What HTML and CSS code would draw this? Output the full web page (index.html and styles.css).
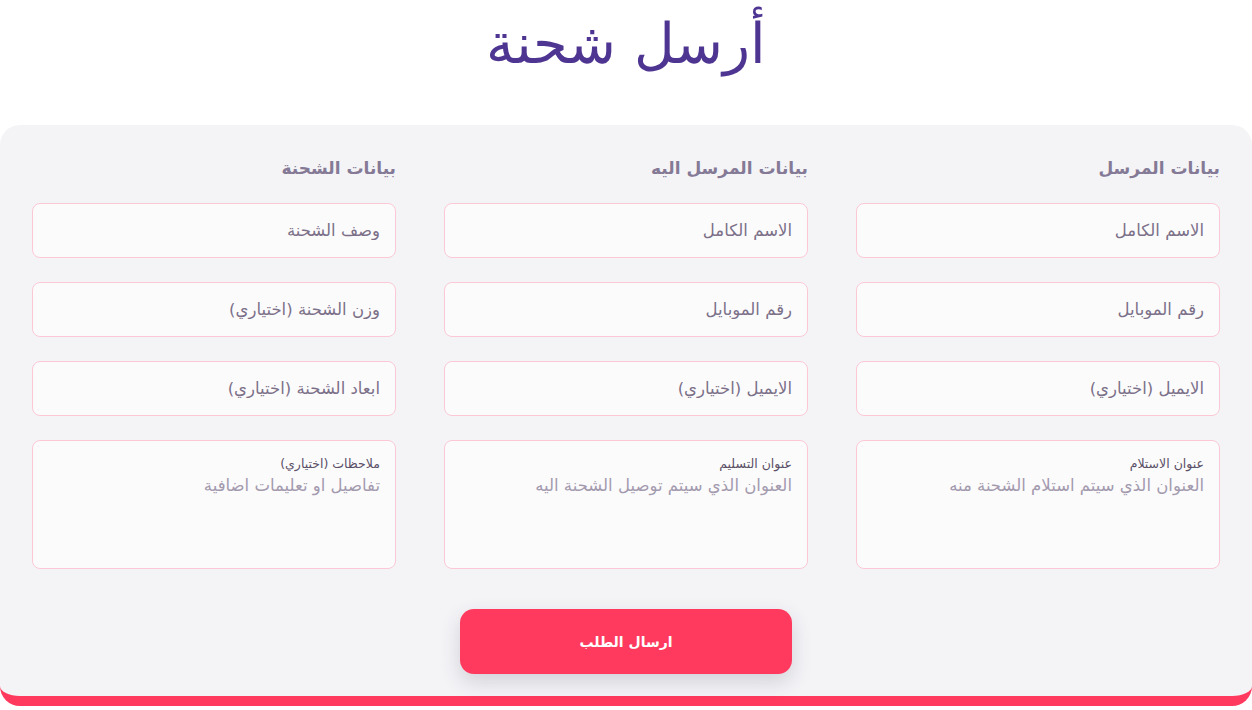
FILE: index.html
```html
<!DOCTYPE html>
<html lang="ar" dir="rtl">
<head>
<meta charset="utf-8">
<title>أرسل شحنة</title>
<link rel="stylesheet" href="styles.css">
</head>
<body>
<header class="page-head">
  <h1 class="title">أرسل شحنة</h1>
</header>
<main class="card">
  <div class="columns">
    <section class="col">
      <h2 class="col-title">بيانات المرسل</h2>
      <input class="field" type="text" placeholder="الاسم الكامل">
      <input class="field" type="text" placeholder="رقم الموبايل">
      <input class="field" type="text" placeholder="الايميل (اختياري)">
      <label class="area">
        <span class="area-label">عنوان الاستلام</span>
        <textarea class="area-input" placeholder="العنوان الذي سيتم استلام الشحنة منه"></textarea>
      </label>
    </section>
    <section class="col">
      <h2 class="col-title">بيانات المرسل اليه</h2>
      <input class="field" type="text" placeholder="الاسم الكامل">
      <input class="field" type="text" placeholder="رقم الموبايل">
      <input class="field" type="text" placeholder="الايميل (اختياري)">
      <label class="area">
        <span class="area-label">عنوان التسليم</span>
        <textarea class="area-input" placeholder="العنوان الذي سيتم توصيل الشحنة اليه"></textarea>
      </label>
    </section>
    <section class="col">
      <h2 class="col-title">بيانات الشحنة</h2>
      <input class="field" type="text" placeholder="وصف الشحنة">
      <input class="field" type="text" placeholder="وزن الشحنة (اختياري)">
      <input class="field" type="text" placeholder="ابعاد الشحنة (اختياري)">
      <label class="area">
        <span class="area-label">ملاحظات (اختياري)</span>
        <textarea class="area-input" placeholder="تفاصيل او تعليمات اضافية"></textarea>
      </label>
    </section>
  </div>
  <div class="actions">
    <button class="submit" type="button">ارسال الطلب</button>
  </div>
</main>
</body>
</html>
```

FILE: styles.css
```css
* { box-sizing: border-box; }
html, body {
  margin: 0;
  padding: 0;
  background: #ffffff;
}
body {
  font-family: "DejaVu Sans", "Noto Sans", sans-serif;
  width: 1252px;
  height: 710px;
  overflow: hidden;
}
.page-head {
  height: 125px;
  display: flex;
  justify-content: center;
  align-items: flex-start;
}
.title {
  margin: 0;
  padding-top: 6px;
  font-size: 56px;
  font-weight: 300;
  line-height: 76px;
  color: #4f3592;
}
.card {
  background: #f4f4f7;
  border-radius: 20px;
  border-bottom: 10px solid #ff3a5e;
  padding: 30px 32px 22px;
}
.columns {
  display: grid;
  grid-template-columns: repeat(3, 364px);
  gap: 48px;
}
.col {
  display: flex;
  flex-direction: column;
  gap: 24px;
}
.col-title {
  margin: 0;
  height: 24px;
  line-height: 26px;
  font-size: 17px;
  font-weight: 700;
  color: #857a96;
}
.field {
  display: block;
  width: 100%;
  height: 55px;
  border: 1px solid #fcc8d6;
  border-radius: 8px;
  background: #fbfbfc;
  padding: 0 15px;
  font-family: inherit;
  font-size: 16.5px;
  color: #3c3446;
  outline: none;
}
.field::placeholder { color: #7b7088; opacity: 1; }
.area {
  display: flex;
  flex-direction: column;
  height: 129px;
  border: 1px solid #fcc8d6;
  border-radius: 8px;
  background: #fbfbfc;
  padding: 14px 15px 10px;
}
.area-label {
  font-size: 12.5px;
  line-height: 18px;
  color: #5a4f66;
}
.area-input {
  flex: 1;
  border: 0;
  background: transparent;
  resize: none;
  padding: 0;
  margin-top: 1px;
  font-family: inherit;
  font-size: 16.5px;
  line-height: 24px;
  color: #3c3446;
  outline: none;
}
.area-input::placeholder { color: #a39aae; opacity: 1; }
.actions {
  display: flex;
  justify-content: center;
  margin-top: 40px;
}
.submit {
  width: 332px;
  height: 65px;
  border: 0;
  border-radius: 14px;
  background: #ff3a5e;
  color: #ffffff;
  font-family: inherit;
  font-size: 14px;
  font-weight: 700;
  box-shadow: 0 8px 20px rgba(60, 50, 80, 0.18);
  cursor: pointer;
}
```
